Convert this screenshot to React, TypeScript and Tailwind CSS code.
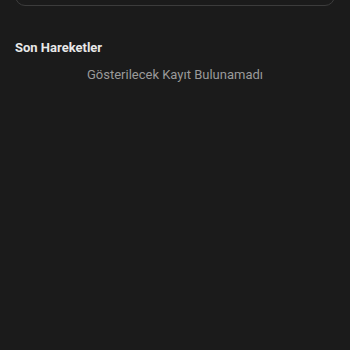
export default function App() {
  return (
    <div className="h-[350px] w-[350px] overflow-hidden bg-[#1b1b1b] font-['Roboto',sans-serif]">
      <div className="px-[15px]">
        {/* üstteki kart, kaydırılmış */}
        <div className="-mt-[60px] h-[66px] rounded-[10px] border border-[#3c3c3c]" />

        <h2 className="mt-[32px] text-[13px] font-bold leading-[20px] text-[#e8e8e8]">Son Hareketler</h2>
        <p className="mt-[7px] text-center text-[13px] leading-[20px] text-[#9a9a9a]">
          Gösterilecek Kayıt Bulunamadı
        </p>
      </div>
    </div>
  );
}
